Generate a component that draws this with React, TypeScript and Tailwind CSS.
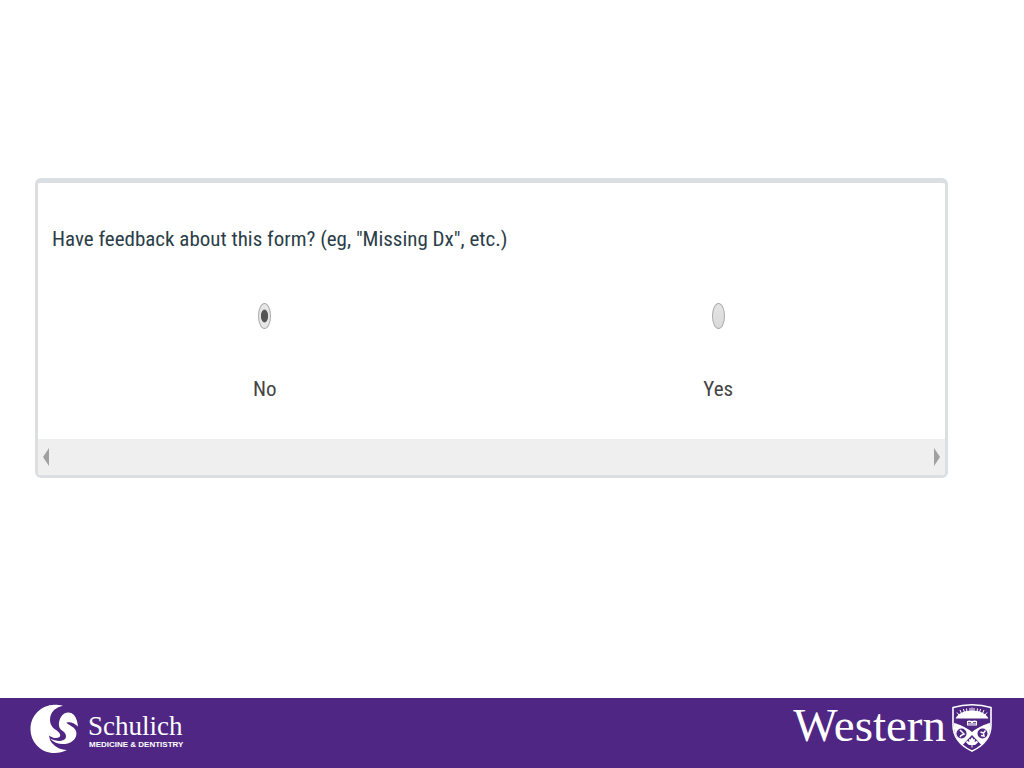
const radioClass =
  "block h-[26px] w-[13px] appearance-none rounded-[50%] border border-[#a9a9a9] bg-linear-to-b from-[#e4e4e4] to-[#dadada] " +
  "checked:bg-[radial-gradient(ellipse_4px_7px_at_center,#555_80%,#e6e6e6_100%)]";

function Option({ label, checked }: { label: string; checked?: boolean }) {
  return (
    <label className="flex flex-1 flex-col items-center gap-[44px]">
      <input type="radio" name="feedback" defaultChecked={checked} className={radioClass} />
      <span className="text-[21px] leading-8 text-[#444]">{label}</span>
    </label>
  );
}

function SchulichMark() {
  return (
    <svg viewBox="0 0 48 50" className="h-[50px] w-12" aria-hidden="true">
      <path
        fill="#fff"
        d="M33 1.800C30 .9 27.500 .7 24.500 .7C11 1 .5 11.500 .5 25C.5 38.500 11 49 24.500 49C29 49 33 48 37 46C30 46 23 42 20 36L19 31.500C22 34 27 35 29.500 33C31.500 31 29 28 26 26C21 23 19 18 20.500 12C22 7 26 3.500 33 1.800Z"
      />
      <path
        fill="#fff"
        d="M31 13C33 8.500 40 6.500 44 11C46.500 14 47.500 18 48 22.500C44 18.500 40 17.500 36.500 18.500C37 20.500 44 22 46 27C48 33 43 39 35 40C29 40.500 24 39 20 34.500C26 37.500 33 38 35.500 34.500C37 31 35 28.500 32 26.500C27.500 23.500 28.500 17 31 13Z"
      />
    </svg>
  );
}

function Crest() {
  return (
    <svg viewBox="0 0 40 48" className="h-12 w-10" aria-hidden="true">
      <path
        fill="#4f2683"
        stroke="#fff"
        strokeWidth="1.600"
        d="M1 3.500Q10 .8 20 .8Q30 .8 39 3.500V21Q39 38 20 47Q1 38 1 21Z"
      />
      <path fill="#fff" d="M3.500 14.500C6 9.500 12 6.500 20 6.500S34 9.500 36.500 14.500Z" />
      <path
        stroke="#fff"
        strokeWidth="1"
        d="M7 11L5 8.500M9.500 9.500L8 6M12.500 8.500L11.500 5M15 8L14.500 4.500M18 7.500V4M20 7.500V3.500M22 7.500V4M25 8L25.500 4.500M27.500 8.500L28.500 5M30.500 9.500L32 6M33 11L35 8.500"
      />
      <path fill="#fff" d="M15 17Q17.500 16 20 17Q22.500 16 25 17V21.500H15Z" />
      <path stroke="#4f2683" strokeWidth=".8" d="M16 18.500H19M21 18.500H24M16 20H24" />
      <path
        fill="#fff"
        d="M2 19L4 19.500Q14 23 20 28Q26 23 36 19.500L38 19V25Q36 37 29 41L20 33L11 41Q4 36 2 25Z"
      />
      <circle cx="9.500" cy="29.500" r="5" fill="#4f2683" />
      <circle cx="30.500" cy="29.500" r="5" fill="#4f2683" />
      <path fill="none" stroke="#fff" strokeWidth="1.500" d="M8 26L10 28L12 30L9 31.500L8 33" />
      <path fill="none" stroke="#fff" strokeWidth="1.500" d="M33.500 26.500L31.500 29L28.500 28M31.500 29L32 32L29 31.500" />
      <path fill="#4f2683" d="M20 31L29 40.500Q25 44 20 46Q15 44 11 40.500Z" />
      <path
        fill="#fff"
        d="M20 33L21.500 35.500L23 35L22.700 38L25 36.700L26 38.500L23 41H20.500V43.500H19.500V41H17L14 38.500L15 36.700L17.300 38L17 35L18.500 35.500Z"
      />
    </svg>
  );
}

function Arrow({ label, points }: { label: string; points: string }) {
  return (
    <button type="button" aria-label={label} className="flex w-4 items-center justify-center">
      <svg viewBox="0 0 6 18" className="h-[18px] w-[6px]" aria-hidden="true">
        <polygon points={points} fill="#a0a0a0" />
      </svg>
    </button>
  );
}

export default function App() {
  return (
    <div className="flex min-h-screen flex-col bg-white font-['Roboto_Condensed','Roboto','Liberation_Sans',sans-serif]">
      <main className="flex-1 pt-[178px] pr-[76px] pl-[35px]">
        <form className="overflow-hidden rounded-md border-x-3 border-t-[5px] border-b-3 border-[#dcdfe1]">
          <fieldset aria-label="Form feedback" className="pt-9 pb-[34px]">
            <p className="px-[14px] text-[21px] leading-10 text-[#2b3e48]">
              Have feedback about this form? (eg, "Missing Dx", etc.)
            </p>
            <div className="flex pt-[44px]">
              <Option label="No" checked />
              <Option label="Yes" />
            </div>
          </fieldset>
          <div className="flex h-9 justify-between bg-[#efefef]">
            <Arrow label="Scroll left" points="6,0 6,18 0,9" />
            <Arrow label="Scroll right" points="0,0 0,18 6,9" />
          </div>
        </form>
      </main>
      <footer className="flex h-[70px] items-start justify-between bg-[#4f2683] pr-8 pl-[30px] text-white">
        <div className="flex gap-[10px] pt-[6px]">
          <SchulichMark />
          <div className="flex flex-col pt-2">
            <span className="font-['Liberation_Serif',serif] text-[27px] leading-7">Schulich</span>
            <span className="pl-px font-['Liberation_Sans',sans-serif] text-[8px] leading-[10px] font-bold">
              MEDICINE &amp; DENTISTRY
            </span>
          </div>
        </div>
        <div className="flex gap-[6px] pt-[6px]">
          <span className="font-['Liberation_Serif',serif] text-[47px] leading-[42px]">Western</span>
          <Crest />
        </div>
      </footer>
    </div>
  );
}
